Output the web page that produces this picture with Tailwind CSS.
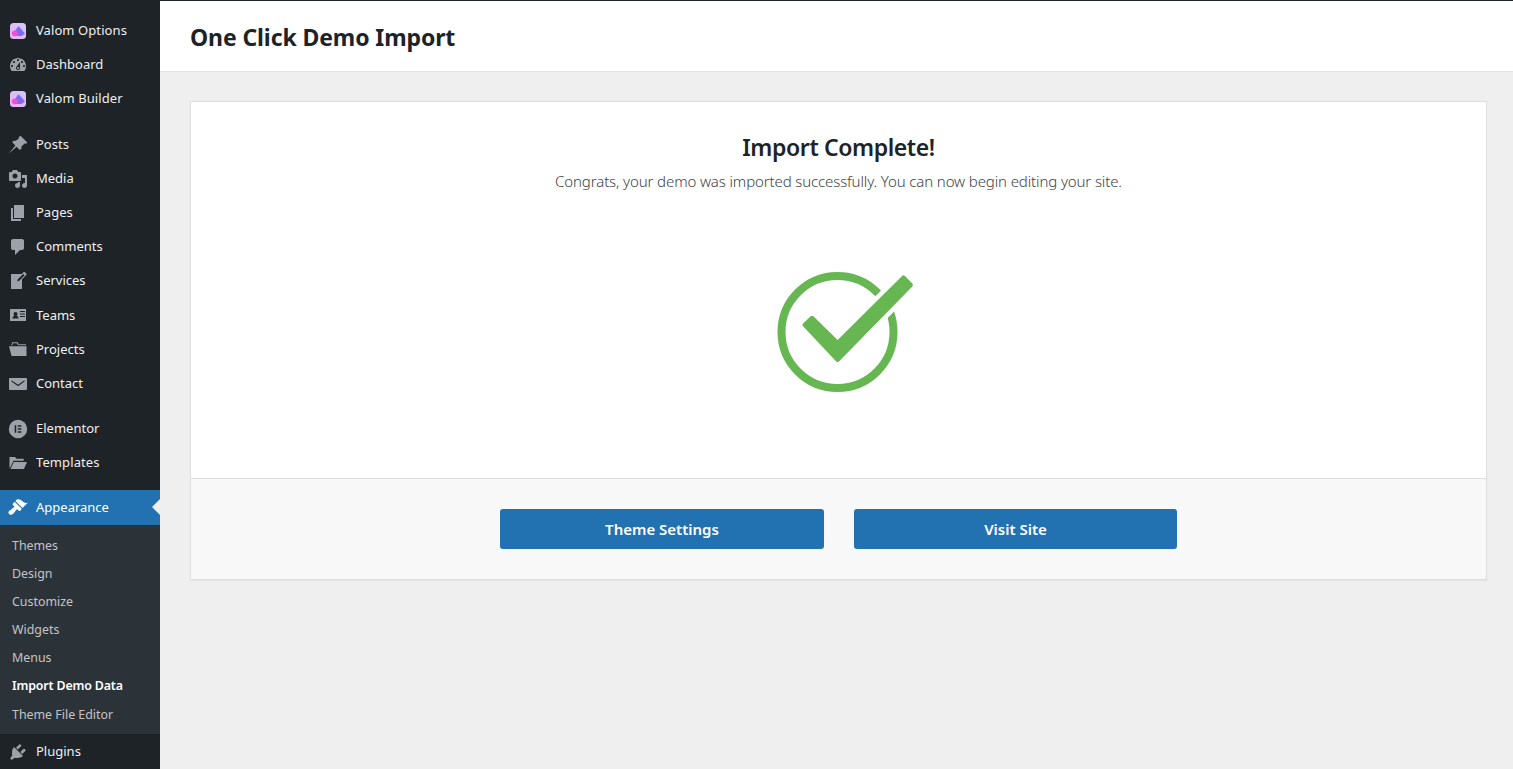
<!DOCTYPE html>
<html>
<head>
<meta charset="utf-8">
<script src="https://cdn.jsdelivr.net/npm/@tailwindcss/browser@4"></script>
<title>One Click Demo Import</title>
</head>
<body class="bg-[#efefef] font-['Noto_Sans',sans-serif]">
<div class="flex h-[769px] overflow-hidden">
  <aside class="w-40 shrink-0 bg-[#1d2327] text-[13px] text-[#f0f0f1] overflow-hidden">
    <nav class="pt-[13.5px] flex flex-col">
      <div class="flex flex-col">
        <a class="h-[34px] flex items-center gap-[10px] pl-[10px]"><svg class="w-4 h-4 shrink-0" viewBox="0 0 16 16"><defs><linearGradient id="v1" x1="0" y1="1" x2="1" y2="0"><stop offset="0" stop-color="#eeb0f5"/><stop offset="1" stop-color="#cfcafc"/></linearGradient></defs><rect width="16" height="16" rx="3.5" fill="url(#v1)"/><path d="M4 9.500 7.800 4a1 1 0 0 1 1.600 0L15 10.500 11.500 13H6.500Z" fill="#7d6cf3"/><circle cx="4.800" cy="10.300" r="2.900" fill="#f24fd6"/></svg><span class="tracking-[0.08px]">Valom Options</span></a>
        <a class="h-[34px] flex items-center gap-2 pl-2"><svg class="w-[20px] h-[20px] shrink-0 fill-[#9ca2a7]" viewBox="0 0 20 20"><path fill-rule="evenodd" d="M3.760 16h12.480c1.100-1.370 1.760-3.110 1.760-5 0-4.420-3.580-8-8-8s-8 3.580-8 8c0 1.890.66 3.630 1.760 5zM10 4c.55 0 1 .45 1 1s-.45 1-1 1-1-.45-1-1 .45-1 1-1zM6 6c.55 0 1 .45 1 1s-.45 1-1 1-1-.45-1-1 .45-1 1-1zm8 0c.55 0 1 .45 1 1s-.45 1-1 1-1-.45-1-1 .45-1 1-1zm-5.370 5.550L12 7v6c0 1.100-.9 2-2 2s-2-.9-2-2c0-.57.24-1.080.63-1.450zM4 10c.55 0 1 .45 1 1s-.45 1-1 1-1-.45-1-1 .45-1 1-1zm12 0c.55 0 1 .45 1 1s-.45 1-1 1-1-.45-1-1 .45-1 1-1zm-5 3c0-.55-.45-1-1-1s-1 .45-1 1 .45 1 1 1 1-.45 1-1z"/></svg><span>Dashboard</span></a>
        <a class="h-[34px] flex items-center gap-[10px] pl-[10px]"><svg class="w-4 h-4 shrink-0" viewBox="0 0 16 16"><rect width="16" height="16" rx="3.5" fill="url(#v1)"/><path d="M4 9.500 7.800 4a1 1 0 0 1 1.600 0L15 10.500 11.500 13H6.500Z" fill="#7d6cf3"/><circle cx="4.800" cy="10.300" r="2.900" fill="#f24fd6"/></svg><span class="tracking-[0.1px]">Valom Builder</span></a>
      </div>
      <div class="flex flex-col mt-3">
        <a class="h-[34.15px] flex items-center gap-2 pl-2"><svg class="w-[20px] h-[20px] shrink-0 fill-[#9ca2a7]" viewBox="0 0 20 20"><path d="M12.500.8l6.800 6.700-1.500 1.400c-.5-.4-1.200-.4-1.700 0l-2.400 2.400c-.5.5-.5 1.300-.1 2.100l-1.700 1.700-3.300-3.300-8 6.900 6.800-8.200-3.200-3.300 1.700-1.600c.8.400 1.600.4 2.100-.1L10.400 4c.5-.5.5-1.200.1-1.700z"/></svg><span>Posts</span></a>
        <a class="h-[34.15px] flex items-center gap-2 pl-2"><svg class="w-[20px] h-[20px] shrink-0 fill-[#9ca2a7]" viewBox="0 0 20 20"><path fill-rule="evenodd" d="M13 11V4c0-.55-.45-1-1-1h-1.670L9 1H5L3.670 3H2c-.55 0-1 .45-1 1v7c0 .55.45 1 1 1h10c.55 0 1-.45 1-1zM7 4.500c1.380 0 2.500 1.120 2.500 2.500S8.380 9.500 7 9.500 4.500 8.380 4.500 7 5.620 4.500 7 4.500zM14 6h5v10.500c0 1.380-1.120 2.500-2.500 2.500S14 17.880 14 16.500s1.120-2.500 2.500-2.500c.17 0 .34.02.5.05V9h-3V6zm-4 8.050V13h2v3.500c0 1.380-1.120 2.500-2.500 2.500S7 17.880 7 16.500 8.120 14 9.500 14c.17 0 .34.02.5.05z"/></svg><span>Media</span></a>
        <a class="h-[34.15px] flex items-center gap-2 pl-2"><svg class="w-[20px] h-[20px] shrink-0 fill-[#9ca2a7]" viewBox="0 0 20 20"><path d="M6 15V2h10v13H6zm-1 1h8v2H3V5h2v11z"/></svg><span>Pages</span></a>
        <a class="h-[34.15px] flex items-center gap-2 pl-2"><svg class="w-[20px] h-[20px] shrink-0 fill-[#9ca2a7]" viewBox="0 0 20 20"><path d="M5 2h9c1.100 0 2 .9 2 2v7c0 1.100-.9 2-2 2h-2l-5 5v-5H5c-1.100 0-2-.9-2-2V4c0-1.100.9-2 2-2z"/></svg><span>Comments</span></a>
        <a class="h-[34.15px] flex items-center gap-2 pl-2"><svg class="w-[20px] h-[20px] shrink-0 fill-[#9ca2a7]" viewBox="0 0 20 20"><path fill-rule="evenodd" d="M16.890 1.200l1.410 1.410c.39.39.39 1.020 0 1.410L14 8.330V18H3V3h10.670l1.800-1.800c.4-.39 1.030-.4 1.420 0zm-5.660 8.480l5.370-5.360-1.420-1.420-5.360 5.370-.71 2.120z"/></svg><span>Services</span></a>
        <a class="h-[34.15px] flex items-center gap-2 pl-2"><svg class="w-[20px] h-[20px] shrink-0 fill-[#9ca2a7]" viewBox="0 0 20 20"><path fill-rule="evenodd" d="M2 4h16v12H2V4zm2.500 9.500h6c0-1.600-1-2.400-2-2.700.6-.4 1-1 1-1.800 0-1.100-.9-2-2-2s-2 .9-2 2c0 .8.4 1.400 1 1.800-1 .3-2 1.100-2 2.700zM12 6v1h5V6h-5zm0 2.500v1h5v-1h-5zm0 2.500v1h5v-1h-5z"/></svg><span>Teams</span></a>
        <a class="h-[34.15px] flex items-center gap-2 pl-2"><svg class="w-[20px] h-[20px] shrink-0 fill-[#9ca2a7]" viewBox="0 0 20 20"><path d="M1 7.200H18.500V17H3.500Z"/><path d="M3.200 6.200 4.300 3.300H9.800L11.200 6.200H10L9 4.300H5L4.300 6.200Z"/><path d="M11.500 6.200H18V5.200H11Z"/></svg><span>Projects</span></a>
        <a class="h-[34.15px] flex items-center gap-2 pl-2"><svg class="w-[20px] h-[20px] shrink-0 fill-[#9ca2a7]" viewBox="0 0 20 20"><path fill-rule="evenodd" d="M2 4h16a1 1 0 0 1 1 1v10a1 1 0 0 1-1 1H2a1 1 0 0 1-1-1V5a1 1 0 0 1 1-1zm1.500 2.200v1.300L10 12.200l6.500-4.700V6.200L10 10.800z"/></svg><span>Contact</span></a>
      </div>
      <div class="flex flex-col mt-[11px]">
        <a class="h-[34px] flex items-center gap-2 pl-2"><svg class="w-[20px] h-[20px] shrink-0 fill-[#9ca2a7]" viewBox="0 0 20 20"><path fill-rule="evenodd" d="M10 .8a9.200 9.200 0 1 1 0 18.400A9.200 9.200 0 0 1 10 .8zM6.700 6.200v7.600h1.500V6.200zm3 0v1.500h3.600V6.200zm0 3.050v1.500h3.600v-1.500zm0 3.050v1.500h3.600v-1.500z"/></svg><span>Elementor</span></a>
        <a class="h-[34px] flex items-center gap-2 pl-2"><svg class="w-[20px] h-[20px] shrink-0 fill-[#9ca2a7]" viewBox="0 0 20 20"><path d="M1.500 15.500V4h5.500l1.500 1.800h7.200v2H5.500L3 13zM5.800 9H19l-3 7H2.500z"/></svg><span class="tracking-[0.1px]">Templates</span></a>
      </div>
      <a class="relative mt-[10.3px] h-[35px] flex items-center gap-2 pl-2 bg-[#2271b1] text-white"><svg class="w-[20px] h-[20px] shrink-0 fill-white" viewBox="0 0 20 20"><path d="M14.480 11.060L7.410 3.990l1.500-1.500c.5-.56 2.300-.47 3.510.32 1.210.8 1.430 1.280 2.910 2.100 1.180.64 2.450 1.260 4.450.85zm-.71.71L6.700 4.700 4.930 6.470c-.39.39-.39 1.020 0 1.410l1.060 1.060c.39.39.39 1.030 0 1.420-.6.6-1.430 1.110-2.210 1.690-.35.26-.7.53-1.010.84C1.430 13.230.39 14.450.4 15.500c.02 1.100 1.270 2.360 2.370 2.340 1.050-.01 2.280-1.020 3.130-1.920.3-.32.57-.68.82-1.030.57-.79 1.080-1.620 1.680-2.220.39-.39 1.030-.39 1.420 0l1.060 1.060c.39.39 1.020.39 1.410 0z"/></svg><span>Appearance</span><span class="absolute right-0 top-1/2 -translate-y-1/2 w-0 h-0 border-y-[8px] border-y-transparent border-r-[8px] border-r-[#efefef]"></span></a>
      <div class="bg-[#2c3338] pt-[6.8px] pb-[5.4px] text-[12.4px] text-[#c3c4c7] flex flex-col">
        <a class="h-[28.2px] flex items-center pl-3">Themes</a>
        <a class="h-[28.2px] flex items-center pl-3">Design</a>
        <a class="h-[28.2px] flex items-center pl-3">Customize</a>
        <a class="h-[28.2px] flex items-center pl-3">Widgets</a>
        <a class="h-[28.2px] flex items-center pl-3">Menus</a>
        <a class="h-[28.2px] flex items-center pl-3 font-semibold text-white tracking-[-0.15px]">Import Demo Data</a>
        <a class="h-[28.2px] flex items-center pl-3">Theme File Editor</a>
      </div>
      <a class="h-[35px] flex items-center gap-2 pl-2"><svg class="w-[20px] h-[20px] shrink-0 fill-[#9ca2a7]" viewBox="0 0 20 20"><path d="M13.110 4.360L9.870 7.600 8 5.730l3.240-3.240c.35-.34 1.050-.2 1.560.32.52.51.66 1.210.31 1.550zm-8 1.770l.91-1.120 9.010 9.010-1.190.84c-.71.71-2.630 1.160-3.820 1.160H6.140L4.900 17.260c-.59.59-1.540.59-2.120 0-.59-.58-.59-1.530 0-2.120l1.240-1.240v-3.880c0-1.130.4-3.190 1.090-3.890zm7.260 3.970l3.240-3.240c.34-.35 1.040-.21 1.550.31.52.51.66 1.210.31 1.550l-3.240 3.250z"/></svg><span>Plugins</span></a>
    </nav>
  </aside>
  <main class="flex-1 min-w-0">
    <header class="h-[72px] bg-white border-t border-t-[#1d2327] border-b border-b-[#e2e2e2] flex items-center pl-[30px] pt-[2px]">
      <h1 class="text-[23px] tracking-[-0.1px] font-bold text-[#1d2327] leading-none">One Click Demo Import</h1>
    </header>
    <div class="pt-[29px] pl-[30px] pr-[26px]">
      <section class="bg-white border border-[#dedede] shadow-[0_1px_1px_rgba(0,0,0,0.04)]">
        <div class="h-[376px] flex flex-col items-center">
          <h2 class="mt-[29px] text-[23px] tracking-[-0.4px] leading-[32px] font-semibold text-[#1d2327]">Import Complete!</h2>
          <p class="mt-[8px] text-[15px] tracking-[-0.12px] leading-[20px] font-light text-[#3c434a]">Congrats, your demo was imported successfully. You can now begin editing your site.</p>
          <svg class="mt-[79px] w-[160px] h-[124px] overflow-visible" viewBox="0 0 160 124" fill="none"><circle cx="78.500" cy="62" r="56" stroke="#66b752" stroke-width="8"/><path d="M45.500 55 53 47.800 78.500 72.800 144.500 7.300 151.900 15 78.500 90Z" fill="#fff" stroke="#fff" stroke-width="13" stroke-linejoin="round"/><path d="M45.500 55 53 47.800 78.500 72.800 144.500 7.300 151.900 15 78.500 90Z" fill="#66b752" stroke="#66b752" stroke-width="4" stroke-linejoin="round"/></svg>
        </div>
        <div class="h-[101px] bg-[#f8f8f8] border-t border-[#dedede] flex items-center justify-center gap-[30px]">
          <a class="w-[324px] h-10 flex items-center justify-center rounded-[3px] bg-[#2271b1] text-white text-[15px] font-semibold">Theme Settings</a>
          <a class="w-[323px] h-10 flex items-center justify-center rounded-[3px] bg-[#2271b1] text-white text-[15px] font-semibold">Visit Site</a>
        </div>
      </section>
    </div>
  </main>
</div>
</body>
</html>
